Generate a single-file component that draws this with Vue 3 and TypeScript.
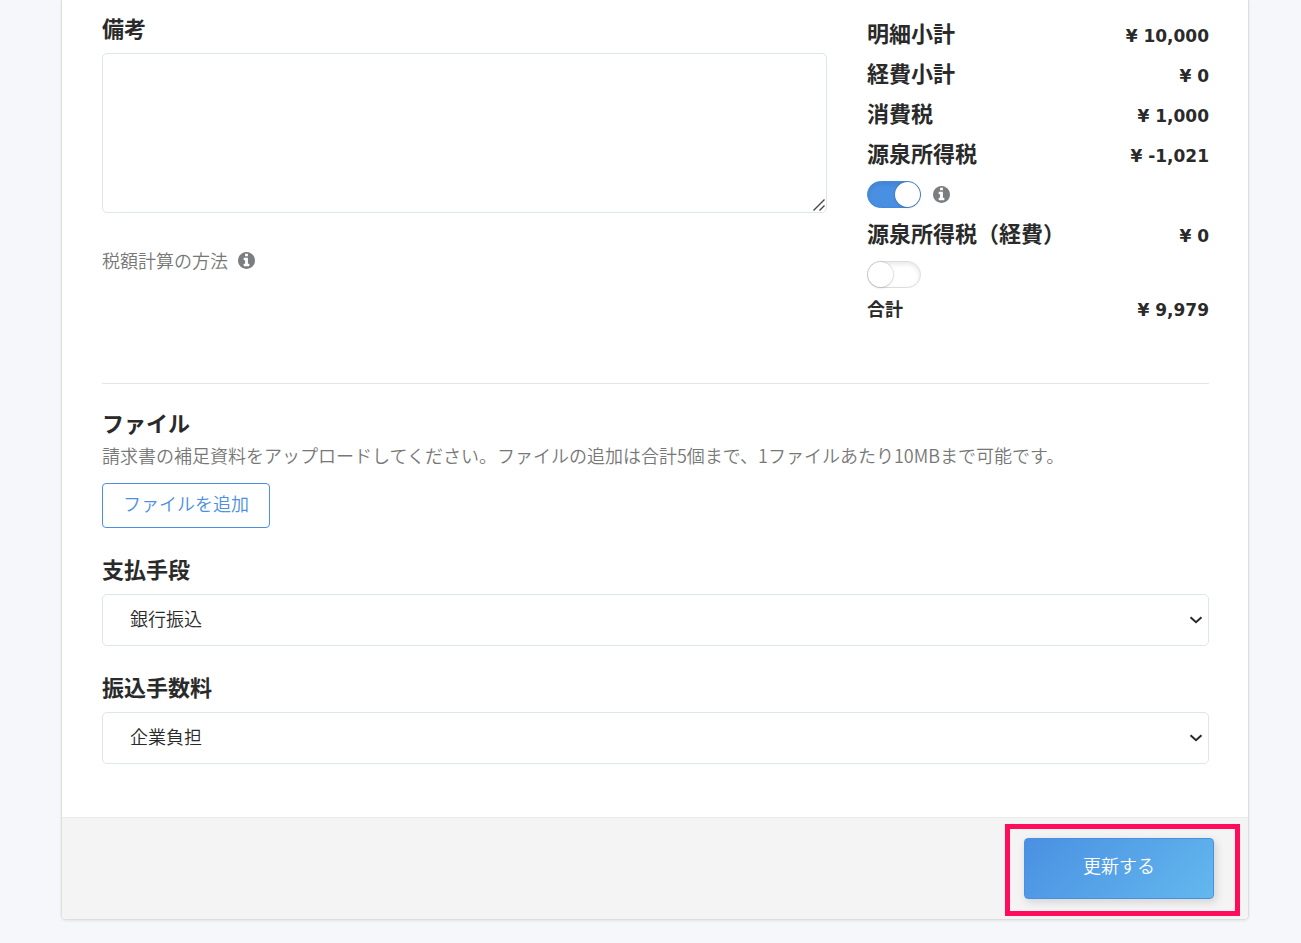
<script setup lang="ts">
import { computed, ref } from 'vue'

interface Summary {
  id: string
  label: string
  amount: number
}

const note = ref('')
const withholding = ref(true)
const withholdingExpense = ref(false)
const payment = ref('銀行振込')
const fee = ref('企業負担')

const subtotals: Summary[] = [
  { id: 'items', label: '明細小計', amount: 10000 },
  { id: 'expenses', label: '経費小計', amount: 0 },
  { id: 'tax', label: '消費税', amount: 1000 },
]

const withheld = computed(() => (withholding.value ? -1021 : 0))
const total = computed(() => subtotals.reduce((sum, row) => sum + row.amount, 0) + withheld.value)

const yen = (value: number): string => `¥ ${value.toLocaleString('en-US')}`

const infoPath =
  'M1152 1376v-160q0-14-9-23t-23-9h-96v-512q0-14-9-23t-23-9h-320q-14 0-23 9t-9 23v160q0 14 9 23t23 9h96v320h-96q-14 0-23 9t-9 23v160q0 14 9 23t23 9h448q14 0 23-9t9-23zm-128-896v-160q0-14-9-23t-23-9h-192q-14 0-23 9t-9 23v160q0 14 9 23t23 9h192q14 0 23-9t9-23zm640 416q0 209-103 385.5t-279.5 279.5-385.5 103-385.5-103-279.5-279.5-103-385.5 103-385.5 279.5-279.5 385.5-103 385.5 103 279.5 279.5 103 385.5z'
</script>

<template>
  <main class="page">
    <form class="card" @submit.prevent>
      <section class="overview">
        <div class="notes">
          <label class="heading" for="note">備考</label>
          <div class="note-wrap">
            <textarea id="note" v-model="note" class="note-box"></textarea>
            <svg class="grip" viewBox="0 0 12 12" aria-hidden="true"><path d="M.5 11.5l11-11M6.500 11.500l5-5" /></svg>
          </div>
          <p class="method">
            税額計算の方法
            <svg class="info" viewBox="128 128 1536 1536" aria-hidden="true"><path :d="infoPath" /></svg>
          </p>
        </div>

        <div class="totals">
          <div v-for="row in subtotals" :key="row.id" class="row">
            <span class="row-label">{{ row.label }}</span>
            <span class="amount">{{ yen(row.amount) }}</span>
          </div>
          <div class="row">
            <label class="row-label" for="withholding">源泉所得税</label>
            <span class="amount">{{ yen(withheld) }}</span>
          </div>
          <div class="switch-row">
            <input id="withholding" v-model="withholding" class="switch" type="checkbox" />
            <svg class="info" viewBox="128 128 1536 1536" aria-hidden="true"><path :d="infoPath" /></svg>
          </div>
          <div class="row">
            <label class="row-label" for="withholding-expense">源泉所得税（経費）</label>
            <span class="amount">{{ yen(0) }}</span>
          </div>
          <div class="switch-row">
            <input id="withholding-expense" v-model="withholdingExpense" class="switch" type="checkbox" />
          </div>
          <div class="row grand">
            <span class="grand-label">合計</span>
            <span class="amount">{{ yen(total) }}</span>
          </div>
        </div>
      </section>

      <section class="details">
        <h2 class="heading">ファイル</h2>
        <p class="hint">請求書の補足資料をアップロードしてください。ファイルの追加は合計5個まで、1ファイルあたり10MBまで可能です。</p>
        <button class="add" type="button">ファイルを追加</button>

        <div class="field">
          <label class="heading" for="payment">支払手段</label>
          <div class="select-wrap">
            <select id="payment" v-model="payment" class="select">
              <option>銀行振込</option>
            </select>
            <svg class="chevron" viewBox="0 0 14 8" aria-hidden="true"><path d="M1.5 1.2 7 6.2l5.5-5" /></svg>
          </div>
        </div>

        <div class="field">
          <label class="heading" for="fee">振込手数料</label>
          <div class="select-wrap">
            <select id="fee" v-model="fee" class="select">
              <option>企業負担</option>
            </select>
            <svg class="chevron" viewBox="0 0 14 8" aria-hidden="true"><path d="M1.5 1.2 7 6.2l5.5-5" /></svg>
          </div>
        </div>
      </section>

      <footer class="actions">
        <div class="submit-wrap">
          <button class="submit" type="submit">更新する</button>
          <span class="highlight" aria-hidden="true"></span>
        </div>
      </footer>
    </form>
  </main>
</template>

<style>
body {
  margin: 0;
  background: #f5f7fb;
}
</style>

<style scoped>
* {
  box-sizing: border-box;
}

.page {
  padding: 0 52px 22px 61px;
  color: #2a2a2a;
  font-family: 'Noto Sans CJK JP', sans-serif;
  font-size: 18px;
  font-weight: 350;
}

.card {
  border: 1px solid #dedede;
  border-top: 0;
  border-radius: 0 0 5px 5px;
  background: #fff;
  box-shadow: 0 1px 3px rgba(0, 0, 0, 0.08);
}

.overview {
  display: grid;
  grid-template-columns: 2.12fr 1fr;
  gap: 40px;
  padding: 12px 39px 59px 40px;
}

.notes {
  display: flex;
  flex-direction: column;
}

.heading {
  display: block;
  margin: 0;
  font-size: 22px;
  font-weight: 700;
  line-height: 30px;
}

.note-wrap {
  position: relative;
  margin-top: 11px;
}

.note-box {
  display: block;
  width: 100%;
  height: 160px;
  padding: 12px;
  border: 1px solid #dde7ea;
  border-radius: 5px;
  background: #fff;
  font: inherit;
  resize: vertical;
}

.note-box::-webkit-resizer {
  background: transparent;
}

.grip {
  position: absolute;
  right: 2px;
  bottom: 2px;
  width: 12px;
  height: 12px;
  fill: none;
  stroke: #444;
  stroke-width: 1.4;
  pointer-events: none;
}

.method {
  display: flex;
  align-items: center;
  gap: 10px;
  margin: 32px 0 0;
  color: #777;
  line-height: 30px;
}

.info {
  width: 17px;
  height: 17px;
  fill: #7b7e80;
}

.row {
  display: flex;
  align-items: baseline;
  justify-content: space-between;
  height: 40px;
}

.row-label {
  font-size: 22px;
  font-weight: 700;
  line-height: 40px;
  white-space: nowrap;
}

.amount {
  font-family: 'DejaVu Sans', sans-serif;
  font-size: 17px;
  font-weight: 700;
  line-height: 24px;
  white-space: nowrap;
}

.grand {
  height: 32px;
}

.grand-label {
  font-weight: 700;
  line-height: 32px;
}

.switch-row {
  display: flex;
  align-items: flex-end;
  gap: 12px;
  height: 40px;
  padding-bottom: 4px;
}

.switch-row .info {
  margin-bottom: 5px;
}

.switch {
  display: flex;
  width: 54px;
  height: 27px;
  margin: 0;
  padding: 0;
  border: 1px solid #dcdcdc;
  border-radius: 14px;
  appearance: none;
  background: #fff;
  box-shadow: inset 0 2px 5px rgba(0, 0, 0, 0.1);
}

.switch::before {
  content: '';
  width: 25px;
  height: 25px;
  border-radius: 50%;
  background: #fff;
  box-shadow: 0 0 0 1px rgba(0, 0, 0, 0.08), 0 1px 3px rgba(0, 0, 0, 0.12);
}

.switch:checked {
  justify-content: flex-end;
  border-color: #4489dc;
  background: #4a90e2;
}

.details {
  margin: 0 39px 0 40px;
  padding: 23px 0 53px;
  border-top: 1px solid #e6e6e6;
}

.hint {
  margin: 0;
  color: #777;
  line-height: 36px;
}

.add {
  display: block;
  height: 45px;
  margin-top: 10px;
  padding: 0 20px 6px;
  border: 1px solid #4a90e2;
  border-radius: 4px;
  background: #fff;
  color: #4a90e2;
  font: inherit;
}

.field {
  margin-top: 25px;
}

.select-wrap {
  position: relative;
  margin-top: 11px;
}

.select {
  display: block;
  width: 100%;
  height: 52px;
  padding: 0 40px 4px 27px;
  border: 1px solid #dde7ea;
  border-radius: 5px;
  appearance: none;
  background: #fff;
  color: inherit;
  font: inherit;
}

.chevron {
  position: absolute;
  top: 22px;
  right: 6px;
  width: 14px;
  height: 8px;
  fill: none;
  stroke: #2a2a2a;
  stroke-width: 2;
  pointer-events: none;
}

.actions {
  display: flex;
  justify-content: flex-end;
  padding: 20px 34px;
  border-top: 1px solid #ebebeb;
  border-radius: 0 0 4px 4px;
  background: #f4f4f4;
}

.submit-wrap {
  position: relative;
}

.submit {
  display: block;
  height: 61px;
  padding: 0 58px 7px;
  border: 1px solid #4a90e2;
  border-radius: 4px;
  background: linear-gradient(135deg, #4a90e2, #63b8ee);
  box-shadow: 2px 3px 8px rgba(0, 0, 0, 0.14);
  color: #fff;
  font: inherit;
}

.highlight {
  position: absolute;
  inset: -14px -26px -17px -19px;
  border: 5px solid #ff0c5a;
  pointer-events: none;
}
</style>
